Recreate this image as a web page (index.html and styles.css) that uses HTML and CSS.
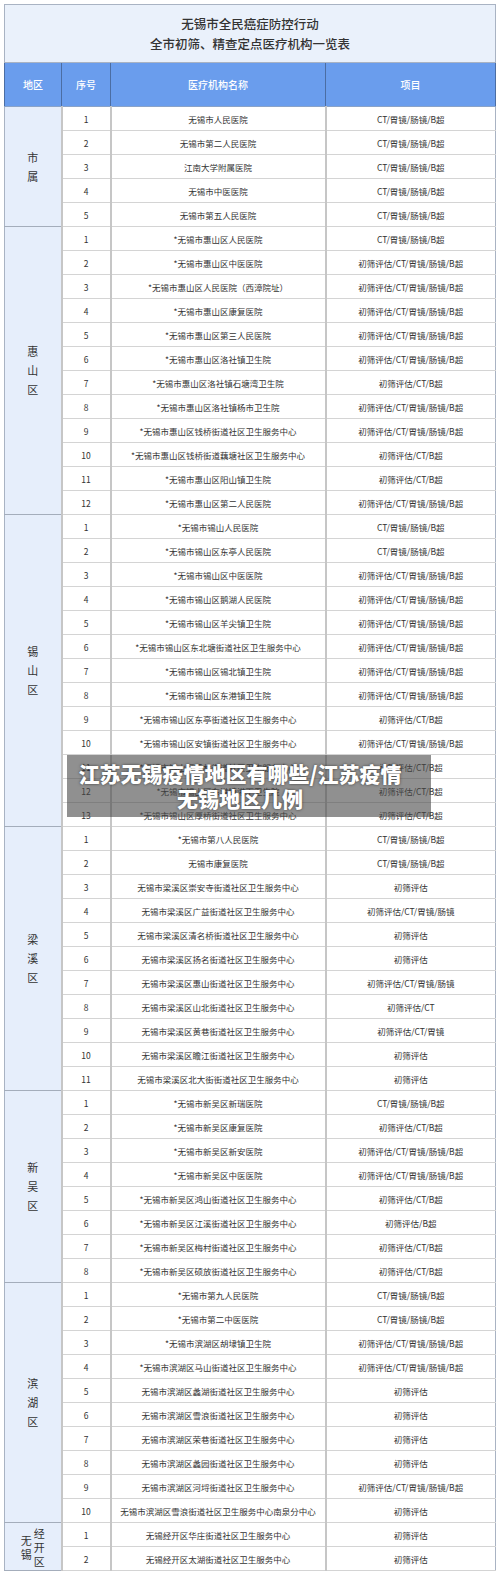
FILE: index.html
```html
<!DOCTYPE html>
<html lang="zh">
<head>
<meta charset="utf-8">
<title>无锡市全民癌症防控行动</title>
<link rel="stylesheet" href="styles.css">
</head>
<body>
<div class="page">
<table class="tbl">
<colgroup><col class="c1"><col class="c2"><col class="c3"><col class="c4"></colgroup>
<thead>
<tr class="title-row"><th colspan="4" class="title">无锡市全民癌症防控行动<br>全市初筛、精查定点医疗机构一览表</th></tr>
<tr class="head-row"><th>地区</th><th>序号</th><th>医疗机构名称</th><th>项目</th></tr>
</thead>
<tbody>
<tr><td class="region" rowspan="5">市<br>属</td><td>1</td><td>无锡市人民医院</td><td>CT/胃镜/肠镜/B超</td></tr>
<tr><td>2</td><td>无锡市第二人民医院</td><td>CT/胃镜/肠镜/B超</td></tr>
<tr><td>3</td><td>江南大学附属医院</td><td>CT/胃镜/肠镜/B超</td></tr>
<tr><td>4</td><td>无锡市中医医院</td><td>CT/胃镜/肠镜/B超</td></tr>
<tr><td>5</td><td>无锡市第五人民医院</td><td>CT/胃镜/肠镜/B超</td></tr>

<tr class="sec"><td class="region" rowspan="12">惠<br>山<br>区</td><td>1</td><td>*无锡市惠山区人民医院</td><td>CT/胃镜/肠镜/B超</td></tr>
<tr><td>2</td><td>*无锡市惠山区中医医院</td><td>初筛评估/CT/胃镜/肠镜/B超</td></tr>
<tr><td>3</td><td>*无锡市惠山区人民医院（西漳院址）</td><td>初筛评估/CT/胃镜/肠镜/B超</td></tr>
<tr><td>4</td><td>*无锡市惠山区康复医院</td><td>初筛评估/CT/胃镜/肠镜/B超</td></tr>
<tr><td>5</td><td>*无锡市惠山区第三人民医院</td><td>初筛评估/CT/胃镜/肠镜/B超</td></tr>
<tr><td>6</td><td>*无锡市惠山区洛社镇卫生院</td><td>初筛评估/CT/胃镜/肠镜/B超</td></tr>
<tr><td>7</td><td>*无锡市惠山区洛社镇石塘湾卫生院</td><td>初筛评估/CT/B超</td></tr>
<tr><td>8</td><td>*无锡市惠山区洛社镇杨市卫生院</td><td>初筛评估/CT/胃镜/肠镜/B超</td></tr>
<tr><td>9</td><td>*无锡市惠山区钱桥街道社区卫生服务中心</td><td>初筛评估/CT/胃镜/肠镜/B超</td></tr>
<tr><td>10</td><td>*无锡市惠山区钱桥街道藕塘社区卫生服务中心</td><td>初筛评估/CT/B超</td></tr>
<tr><td>11</td><td>*无锡市惠山区阳山镇卫生院</td><td>初筛评估/CT/B超</td></tr>
<tr><td>12</td><td>*无锡市惠山区第二人民医院</td><td>初筛评估/CT/胃镜/肠镜/B超</td></tr>

<tr class="sec"><td class="region" rowspan="13">锡<br>山<br>区</td><td>1</td><td>*无锡市锡山人民医院</td><td>CT/胃镜/肠镜/B超</td></tr>
<tr><td>2</td><td>*无锡市锡山区东亭人民医院</td><td>CT/胃镜/肠镜/B超</td></tr>
<tr><td>3</td><td>*无锡市锡山区中医医院</td><td>初筛评估/CT/胃镜/肠镜/B超</td></tr>
<tr><td>4</td><td>*无锡市锡山区鹅湖人民医院</td><td>初筛评估/CT/胃镜/肠镜/B超</td></tr>
<tr><td>5</td><td>*无锡市锡山区羊尖镇卫生院</td><td>初筛评估/CT/胃镜/肠镜/B超</td></tr>
<tr><td>6</td><td>*无锡市锡山区东北塘街道社区卫生服务中心</td><td>初筛评估/CT/胃镜/肠镜/B超</td></tr>
<tr><td>7</td><td>*无锡市锡山区锡北镇卫生院</td><td>初筛评估/CT/胃镜/肠镜/B超</td></tr>
<tr><td>8</td><td>*无锡市锡山区东港镇卫生院</td><td>初筛评估/CT/胃镜/肠镜/B超</td></tr>
<tr><td>9</td><td>*无锡市锡山区东亭街道社区卫生服务中心</td><td>初筛评估/CT/B超</td></tr>
<tr><td>10</td><td>*无锡市锡山区安镇街道社区卫生服务中心</td><td>初筛评估/CT/胃镜/肠镜/B超</td></tr>
<tr><td>11</td><td>*无锡市锡山区云林街道社区卫生服务中心</td><td>初筛评估/CT/B超</td></tr>
<tr><td>12</td><td>*无锡市锡山区东港镇港下卫生院</td><td>初筛评估/CT/B超</td></tr>
<tr><td>13</td><td>*无锡市锡山区厚桥街道社区卫生服务中心</td><td>初筛评估/CT/B超</td></tr>

<tr class="sec"><td class="region" rowspan="11">梁<br>溪<br>区</td><td>1</td><td>*无锡市第八人民医院</td><td>CT/胃镜/肠镜/B超</td></tr>
<tr><td>2</td><td>无锡市康复医院</td><td>CT/胃镜/肠镜/B超</td></tr>
<tr><td>3</td><td>无锡市梁溪区崇安寺街道社区卫生服务中心</td><td>初筛评估</td></tr>
<tr><td>4</td><td>无锡市梁溪区广益街道社区卫生服务中心</td><td>初筛评估/CT/胃镜/肠镜</td></tr>
<tr><td>5</td><td>无锡市梁溪区清名桥街道社区卫生服务中心</td><td>初筛评估</td></tr>
<tr><td>6</td><td>无锡市梁溪区扬名街道社区卫生服务中心</td><td>初筛评估</td></tr>
<tr><td>7</td><td>无锡市梁溪区惠山街道社区卫生服务中心</td><td>初筛评估/CT/胃镜/肠镜</td></tr>
<tr><td>8</td><td>无锡市梁溪区山北街道社区卫生服务中心</td><td>初筛评估/CT</td></tr>
<tr><td>9</td><td>无锡市梁溪区黄巷街道社区卫生服务中心</td><td>初筛评估/CT/胃镜</td></tr>
<tr><td>10</td><td>无锡市梁溪区瞻江街道社区卫生服务中心</td><td>初筛评估</td></tr>
<tr><td>11</td><td>无锡市梁溪区北大街街道社区卫生服务中心</td><td>初筛评估</td></tr>

<tr class="sec"><td class="region" rowspan="8">新<br>吴<br>区</td><td>1</td><td>*无锡市新吴区新瑞医院</td><td>CT/胃镜/肠镜/B超</td></tr>
<tr><td>2</td><td>*无锡市新吴区康复医院</td><td>初筛评估/CT/B超</td></tr>
<tr><td>3</td><td>*无锡市新吴区新安医院</td><td>初筛评估/CT/胃镜/肠镜/B超</td></tr>
<tr><td>4</td><td>*无锡市新吴区中医医院</td><td>初筛评估/CT/胃镜/肠镜/B超</td></tr>
<tr><td>5</td><td>*无锡市新吴区鸿山街道社区卫生服务中心</td><td>初筛评估/CT/B超</td></tr>
<tr><td>6</td><td>*无锡市新吴区江溪街道社区卫生服务中心</td><td>初筛评估/B超</td></tr>
<tr><td>7</td><td>*无锡市新吴区梅村街道社区卫生服务中心</td><td>初筛评估/CT/B超</td></tr>
<tr><td>8</td><td>*无锡市新吴区硕放街道社区卫生服务中心</td><td>初筛评估/CT/B超</td></tr>

<tr class="sec"><td class="region" rowspan="10">滨<br>湖<br>区</td><td>1</td><td>*无锡市第九人民医院</td><td>CT/胃镜/肠镜/B超</td></tr>
<tr><td>2</td><td>*无锡市第二中医医院</td><td>CT/胃镜/肠镜/B超</td></tr>
<tr><td>3</td><td>*无锡市滨湖区胡埭镇卫生院</td><td>初筛评估/CT/胃镜/肠镜/B超</td></tr>
<tr><td>4</td><td>*无锡市滨湖区马山街道社区卫生服务中心</td><td>初筛评估/CT/胃镜/肠镜/B超</td></tr>
<tr><td>5</td><td>无锡市滨湖区蠡湖街道社区卫生服务中心</td><td>初筛评估</td></tr>
<tr><td>6</td><td>无锡市滨湖区雪浪街道社区卫生服务中心</td><td>初筛评估</td></tr>
<tr><td>7</td><td>无锡市滨湖区荣巷街道社区卫生服务中心</td><td>初筛评估</td></tr>
<tr><td>8</td><td>无锡市滨湖区蠡园街道社区卫生服务中心</td><td>初筛评估</td></tr>
<tr><td>9</td><td>无锡市滨湖区河埒街道社区卫生服务中心</td><td>初筛评估/CT/胃镜/肠镜/B超</td></tr>
<tr><td>10</td><td>无锡市滨湖区雪浪街道社区卫生服务中心南泉分中心</td><td>初筛评估</td></tr>

<tr class="sec"><td class="region" rowspan="2"><div class="dual"><span class="vcol">无<br>锡</span><span class="vcol">经<br>开<br>区</span></div></td><td>1</td><td>无锡经开区华庄街道社区卫生服务中心</td><td>初筛评估</td></tr>
<tr><td>2</td><td>无锡经开区太湖街道社区卫生服务中心</td><td>初筛评估</td></tr>
</tbody>
</table>
<div class="watermark"><span class="wm-line">江苏无锡疫情地区有哪些/江苏疫情</span><span class="wm-line">无锡地区几例</span></div>
</div>
</body>
</html>
```

FILE: styles.css
```css
html, body {
  margin: 0;
  padding: 0;
  background: #ffffff;
}
body {
  font-family: "Noto Sans CJK SC", "Noto Sans", sans-serif;
  color: #333333;
}
.page {
  position: relative;
  padding: 4px 0 0 4px;
  width: 496px;
}
.tbl {
  border-collapse: collapse;
  table-layout: fixed;
  width: 491px;
  border: 1px solid #a9b3c3;
}
.c1 { width: 57px; }
.c2 { width: 49px; }
.c3 { width: 215px; }
.c4 { width: 170px; }

.title-row { height: 58px; }
.title {
  background: #eaf1fb;
  font-size: 12.5px;
  font-weight: 500;
  line-height: 20px;
  color: #333;
  padding: 0;
  text-align: center;
  border: 1px solid #a9b3c3;
}
.head-row { height: 44px; }
.head-row th {
  background: #6a9ded;
  color: #ffffff;
  font-size: 10px;
  font-weight: 500;
  border-left: 1px solid #4b6da3;
  border-right: 1px solid #4b6da3;
  border-bottom: 1px solid #8aa3c8;
  padding: 0;
}
tbody tr { height: 24px; }
tbody td {
  font-size: 8.5px;
  text-align: center;
  padding: 0;
  border-bottom: 1px solid #d4d4d4;
  border-left: 2px solid #c6c6c6;
  white-space: nowrap;
  overflow: hidden;
  color: #333;
}
tbody tr.sec td {
  border-top: 1px solid #a4adbb;
}
tbody td.region {
  background: #e6eefb;
  font-size: 11px;
  line-height: 19px;
  border-left: 1px solid #a9b3c3;
  border-right: 1px solid #8f9db5;
  border-bottom: 1px solid #a4adbb;
}
.dual {
  display: flex;
  justify-content: center;
  align-items: center;
  gap: 2px;
  line-height: 14px;
}
.vcol { display: block; }

.watermark {
  position: absolute;
  left: 67px;
  top: 755px;
  width: 326px;
  height: 62px;
  padding: 0 28px 0 10px;
  box-sizing: content-box;
  background: rgba(70, 70, 70, 0.6);
  color: #ffffff;
  font-size: 21px;
  font-weight: 900;
  line-height: 25px;
  display: flex;
  flex-direction: column;
  align-items: center;
  justify-content: center;
  text-shadow: 0 0 3px rgba(0, 0, 0, 0.6);
}
.wm-line {
  display: block;
  white-space: nowrap;
}
```
